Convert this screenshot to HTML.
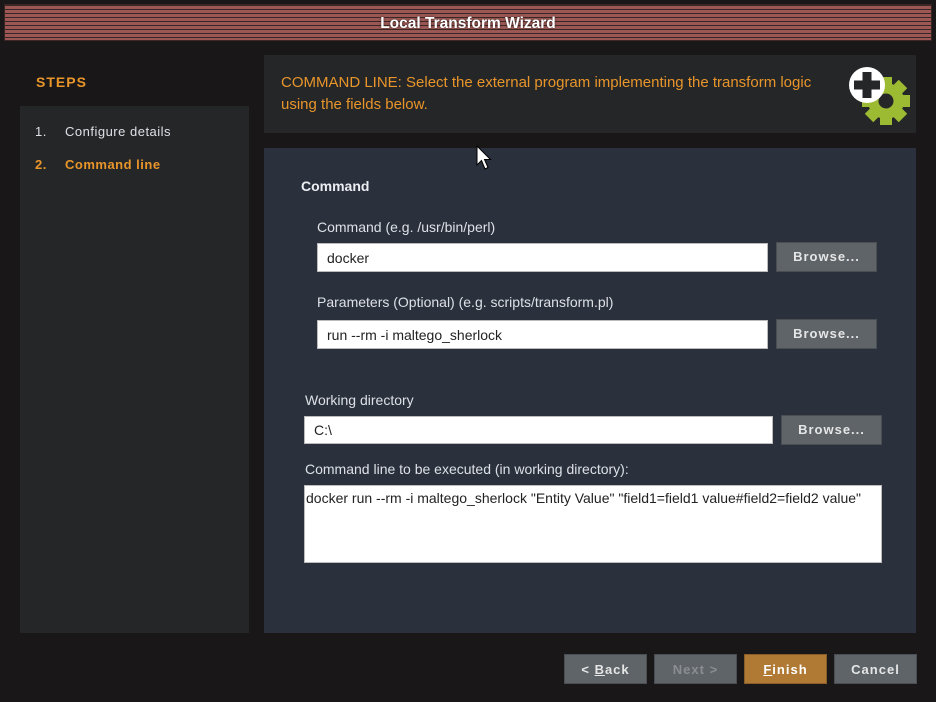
<!DOCTYPE html>
<html><head><style>
*{margin:0;padding:0;box-sizing:border-box}
body{width:936px;height:702px;background:#1a1718;position:relative;overflow:hidden;font-family:"Liberation Sans",sans-serif;font-size:14px}
.a{position:absolute}
.title{left:4px;top:4px;width:928px;height:37px;background:repeating-linear-gradient(to bottom,#3a2624 0,#3a2624 1px,#9a5753 1px,#9a5753 4px);color:#fff;font-weight:bold;font-size:15.5px;text-align:center;line-height:37px;border:1px solid #3a2624}
.title span{text-shadow:0 0 2px #3a2624}
.lbl{color:#dde0e6;font-size:14px}
.inp{background:#fff;color:#222;padding-left:9px;font-size:14px;border:1px solid #bbb}
.btn{background:#5f6468;color:#e6e6e6;font-weight:bold;font-size:13px;text-align:center;border:1px solid #4a4e52;letter-spacing:1px}
</style></head><body>
<div class="a title"><span>Local Transform Wizard</span></div>
<div class="a" style="left:36px;top:74px;color:#e8952a;font-weight:bold;font-size:14px;letter-spacing:1px">STEPS</div>
<div class="a" style="left:20px;top:106px;width:229px;height:527px;background:#252628"></div>
<div class="a" style="left:35px;top:124px;color:#dde0e6;font-size:13px;letter-spacing:.5px">1.</div>
<div class="a" style="left:65px;top:124px;color:#dde0e6;font-size:13px;letter-spacing:.5px">Configure details</div>
<div class="a" style="left:35px;top:157px;color:#e8952a;font-weight:bold;font-size:13px;letter-spacing:.5px">2.</div>
<div class="a" style="left:65px;top:157px;color:#e8952a;font-weight:bold;font-size:13px;letter-spacing:.5px">Command line</div>
<div class="a" style="left:264px;top:55px;width:652px;height:78px;background:#252628"></div>
<div class="a" style="left:281px;top:72px;color:#e8952a;font-size:15px;line-height:22px">COMMAND LINE: Select the external program implementing the transform logic<br>using the fields below.</div>
<svg class="a" style="left:846px;top:64px" width="64" height="64" viewBox="0 0 64 64">
<g transform="translate(40,37)" fill="#9cbb33">
<circle r="18"/>
<g><rect x="-6" y="-24" width="12" height="48"/><rect x="-24" y="-6" width="48" height="12"/><rect x="-6" y="-24" width="12" height="48" transform="rotate(45)"/><rect x="-6" y="-24" width="12" height="48" transform="rotate(-45)"/></g>
<circle r="7.5" fill="#252628"/>
</g>
<circle cx="21" cy="21" r="18" fill="#fff"/>
<rect x="16.5" y="8" width="9" height="26" fill="#252628"/><rect x="8" y="16.5" width="26" height="9" fill="#252628"/>
</svg>
<div class="a" style="left:264px;top:148px;width:652px;height:485px;background:#2a303c"></div>
<div class="a" style="left:301px;top:178px;color:#eceef2;font-weight:bold;font-size:14px">Command</div>
<div class="a lbl" style="left:317px;top:219px">Command (e.g. /usr/bin/perl)</div>
<div class="a inp" style="left:317px;top:243px;width:451px;height:29px;line-height:28px">docker</div>
<div class="a btn" style="left:776px;top:242px;width:101px;height:30px;line-height:28px">Browse...</div>
<div class="a lbl" style="left:317px;top:294px">Parameters (Optional) (e.g. scripts/transform.pl)</div>
<div class="a inp" style="left:317px;top:320px;width:451px;height:29px;line-height:28px">run --rm -i maltego_sherlock</div>
<div class="a btn" style="left:776px;top:319px;width:101px;height:30px;line-height:28px">Browse...</div>
<div class="a lbl" style="left:305px;top:392px">Working directory</div>
<div class="a inp" style="left:304px;top:416px;width:469px;height:28px;line-height:27px">C:\</div>
<div class="a btn" style="left:781px;top:415px;width:101px;height:30px;line-height:28px">Browse...</div>
<div class="a lbl" style="left:305px;top:461px">Command line to be executed (in working directory):</div>
<div class="a inp" style="left:304px;top:485px;width:578px;height:78px;padding:4px 1px;line-height:17px">docker run --rm -i maltego_sherlock "Entity Value" "field1=field1 value#field2=field2 value"</div>
<svg class="a" style="left:476px;top:145px" width="16" height="26" viewBox="0 0 16 26"><path d="M1 1 L1 20 L5.5 15.5 L9 24 L12 22.5 L8.5 14.5 L14.5 14.5 Z" fill="#fff" stroke="#000" stroke-width="1"/></svg>
<div class="a btn" style="left:564px;top:654px;width:83px;height:30px;line-height:29px">&lt; <u>B</u>ack</div>
<div class="a btn" style="left:654px;top:654px;width:83px;height:30px;line-height:29px;color:#8a8e92">Next &gt;</div>
<div class="a btn" style="left:744px;top:654px;width:83px;height:30px;line-height:29px;background:#b07a35;border-color:#8a5e28;color:#fff"><u>F</u>inish</div>
<div class="a btn" style="left:834px;top:654px;width:83px;height:30px;line-height:29px">Cancel</div>
</body></html>
